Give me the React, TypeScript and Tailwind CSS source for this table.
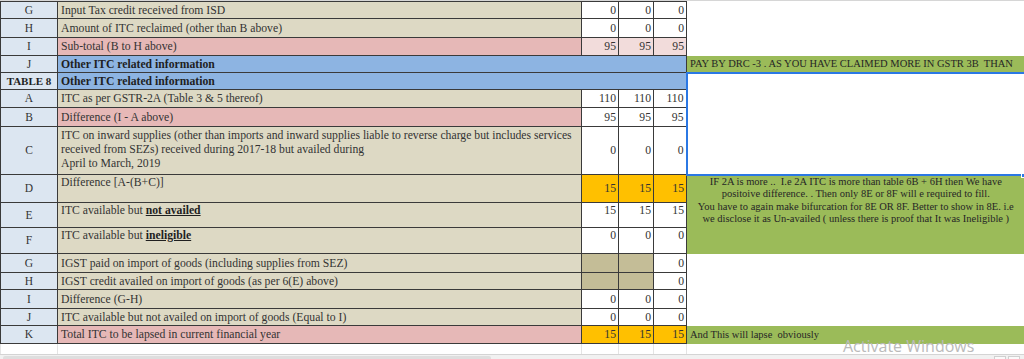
import type { ReactNode } from 'react'

const line = 'border border-[#3a3a3a]'

function Letter({ children, bold, h }: { children: ReactNode; bold?: boolean; h: string }) {
  return (
    <td
      className={`${line} ${h} bg-[#dce6f1] text-center align-middle text-[11.5px] ${
        bold ? 'font-bold text-[11px] text-[#1f1f1f]' : ''
      }`}
    >
      {children}
    </td>
  )
}

function Desc({
  children,
  bg = 'bg-[#ddd9c4]',
  top,
  bold,
  span = 1,
}: {
  children: ReactNode
  bg?: string
  top?: boolean
  bold?: boolean
  span?: number
}) {
  return (
    <td
      colSpan={span}
      className={`${line} ${bg} pl-[3px] whitespace-nowrap overflow-hidden ${top ? 'align-top pt-[1px]' : 'align-middle'} ${
        bold ? 'font-bold text-[#1f1f1f]' : ''
      }`}
    >
      {children}
    </td>
  )
}

function Num({ v, bg = 'bg-white', top }: { v?: string; bg?: string; top?: boolean }) {
  return (
    <td className={`${line} ${bg} pr-[2px] text-right ${top ? 'align-top pt-[1px]' : 'align-middle'}`}>{v}</td>
  )
}

function Nums({ v, bg, top }: { v: string; bg?: string; top?: boolean }) {
  return (
    <>
      <Num v={v} bg={bg} top={top} />
      <Num v={v} bg={bg} top={top} />
      <Num v={v} bg={bg} top={top} />
    </>
  )
}

export default function App() {
  return (
    <div className="relative w-[1024px] h-[359px] overflow-hidden bg-white font-['Liberation_Serif','Times_New_Roman',serif] text-[11.7px] leading-[13px] text-[#333]">
      <div className="h-[1px] bg-[#d6d6d6]" />
      <table className="table-fixed border-collapse w-[1024px]">
        <colgroup>
          <col className="w-[57px]" />
          <col className="w-[524px]" />
          <col className="w-[37px]" />
          <col className="w-[35px]" />
          <col className="w-[33px]" />
          <col className="w-[338px]" />
        </colgroup>
        <tbody>
          <tr>
            <Letter h="h-[17px]">G</Letter>
            <Desc>Input Tax credit received from ISD</Desc>
            <Nums v="0" />
            <td rowSpan={3} className="bg-white" />
          </tr>
          <tr>
            <Letter h="h-[19px]">H</Letter>
            <Desc>Amount of ITC reclaimed (other than B above)</Desc>
            <Nums v="0" />
          </tr>
          <tr>
            <Letter h="h-[18px]">I</Letter>
            <Desc bg="bg-[#e6b8b7]">Sub-total (B to H above)</Desc>
            <Nums v="95" bg="bg-[#f2dcdb]" />
          </tr>
          <tr>
            <Letter h="h-[17px]">J</Letter>
            <Desc bg="bg-[#8db4e2]" bold span={4}>
              Other ITC related information
            </Desc>
            <td className="bg-[#9bbb59] pl-[3px] whitespace-nowrap overflow-hidden text-[10.5px] text-[#262626]">
              PAY BY DRC -3 . AS YOU HAVE CLAIMED MORE IN GSTR 3B&nbsp; THAN
            </td>
          </tr>
          <tr>
            <Letter h="h-[17px]" bold>
              TABLE 8
            </Letter>
            <Desc bg="bg-[#8db4e2]" bold span={4}>
              Other ITC related information
            </Desc>
            <td rowSpan={4} className="relative bg-white border-2 border-[#2b78e4]">
              <div className="absolute right-[-2px] bottom-[-4px] w-[5px] h-[5px] bg-[#2b78e4] border border-white" />
            </td>
          </tr>
          <tr>
            <Letter h="h-[18px]">A</Letter>
            <Desc>ITC as per GSTR-2A (Table 3 &amp; 5 thereof)</Desc>
            <Nums v="110" />
          </tr>
          <tr>
            <Letter h="h-[19px]">B</Letter>
            <Desc bg="bg-[#e6b8b7]">Difference (I - A above)</Desc>
            <Nums v="95" />
          </tr>
          <tr>
            <Letter h="h-[48px]">C</Letter>
            <Desc>
              <div className="leading-[14px] -mt-[2px]">
                ITC on inward supplies (other than imports and inward supplies liable to reverse charge but includes services
                <br />
                received from SEZs) received during 2017-18 but availed during
                <br />
                April to March, 2019
              </div>
            </Desc>
            <Nums v="0" />
          </tr>
          <tr>
            <Letter h="h-[28px]">D</Letter>
            <Desc top>Difference [A-(B+C)]</Desc>
            <Nums v="15" bg="bg-[#ffc000]" />
            <td rowSpan={3} className="bg-[#9bbb59] align-top text-center whitespace-nowrap pt-0 text-[10.5px] leading-[12.5px] text-[#262626]">
              IF 2A is more ..&nbsp; I.e 2A ITC is more than table 6B + 6H then We have
              <br />
              positoive difference. . Then only 8E or 8F will e required to fill.
              <br />
              You have to again make bifurcation for 8E OR 8F. Better to show in 8E. i.e
              <br />
              we disclose it as Un-availed ( unless there is proof that It was Ineligible )
            </td>
          </tr>
          <tr>
            <Letter h="h-[25px]">E</Letter>
            <Desc top>
              ITC available but <span className="font-bold underline text-[#1f1f1f]">not availed</span>
            </Desc>
            <Nums v="15" top />
          </tr>
          <tr>
            <Letter h="h-[26px]">F</Letter>
            <Desc top>
              ITC available but <span className="font-bold underline text-[#1f1f1f]">ineligible</span>
            </Desc>
            <Nums v="0" top />
          </tr>
          <tr>
            <Letter h="h-[19px]">G</Letter>
            <Desc>IGST paid on import of goods (including supplies from SEZ)</Desc>
            <Num bg="bg-[#c4bd97]" />
            <Num bg="bg-[#c4bd97]" />
            <Num v="0" />
            <td rowSpan={4} className="bg-white" />
          </tr>
          <tr>
            <Letter h="h-[17px]">H</Letter>
            <Desc>IGST credit availed on import of goods (as per 6(E) above)</Desc>
            <Num bg="bg-[#c4bd97]" />
            <Num bg="bg-[#c4bd97]" />
            <Num v="0" />
          </tr>
          <tr>
            <Letter h="h-[19px]">I</Letter>
            <Desc>Difference (G-H)</Desc>
            <Nums v="0" />
          </tr>
          <tr>
            <Letter h="h-[17px]">J</Letter>
            <Desc>ITC available but not availed on import of goods (Equal to I)</Desc>
            <Nums v="0" />
          </tr>
          <tr>
            <Letter h="h-[18px]">K</Letter>
            <Desc bg="bg-[#e6b8b7]">Total ITC to be lapsed in current financial year</Desc>
            <Nums v="15" bg="bg-[#ffc000]" />
            <td className="bg-[#9bbb59] pl-[3px] whitespace-nowrap text-[10.5px] text-[#262626]">
              And This will lapse&nbsp; obviously
            </td>
          </tr>
          <tr className="h-[10px]">
            <td className="border-x border-[#e4e4e4]" />
            <td className="border-x border-[#e4e4e4]" />
            <td className="border-x border-[#e4e4e4]" />
            <td className="border-x border-[#e4e4e4]" />
            <td className="border-x border-[#e4e4e4]" />
            <td />
          </tr>
        </tbody>
      </table>
      <div className="flex h-[6px] border-t border-[#d4d4d4] bg-[#f1f1f1] pl-[3px] pt-[1px]">
        <div className="w-[488px] rounded-t-[2px] bg-[#dedede]" />
        <div className="ml-auto flex gap-[2px] pr-[4px]">
          <div className="w-[12px] border border-[#d0d0d0] bg-[#fafafa]" />
          <div className="w-[12px] border border-[#d0d0d0] bg-[#fafafa]" />
        </div>
      </div>
      <div className="absolute left-[843px] top-[337px] font-['Open_Sans',sans-serif] text-[16px] leading-[18px] text-[#bababa]">
        Activate Windows
      </div>
    </div>
  )
}
